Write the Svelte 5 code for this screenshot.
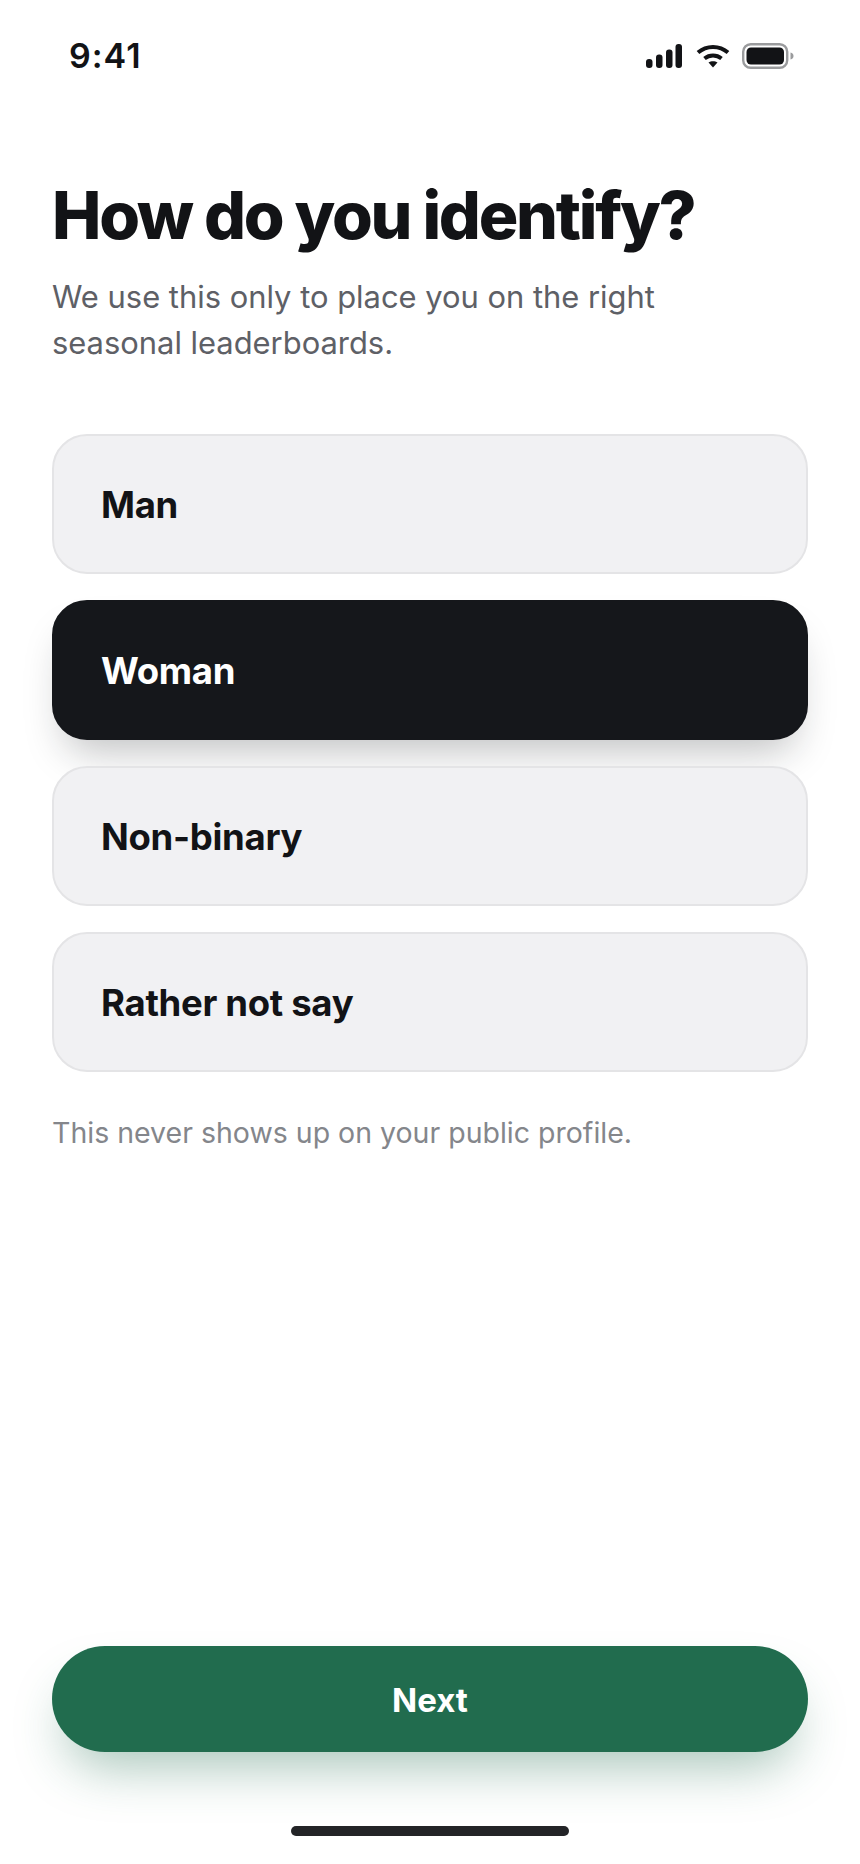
<script>
  const options = ['Man', 'Woman', 'Non-binary', 'Rather not say'];
  let selected = $state('Woman');
</script>

<div class="screen">
  <div class="statusbar">
    <span class="time">9:41</span>
    <div class="status-icons">
      <svg class="signal" width="36" height="24" viewBox="0 0 36 24" fill="#121316">
        <rect x="0" y="15" width="6.5" height="9" rx="3" />
        <rect x="10" y="10.5" width="6.5" height="13.5" rx="3" />
        <rect x="20" y="5.5" width="6.5" height="18.5" rx="3" />
        <rect x="29.5" y="0" width="6.5" height="24" rx="3" />
      </svg>
      <svg width="34" height="24" viewBox="0 0 34 24" fill="none" stroke="#121316" stroke-width="4">
        <path d="M2 8.500C10.500 1 23.500 1 32 8.500" />
        <path d="M8.500 14.500C13.500 10.500 20.500 10.500 25.500 14.500" />
        <path d="M12.500 18.500L17 23.500L21.500 18.500C19 16.800 15 16.800 12.500 18.500Z" fill="#121316" stroke="none" />
      </svg>
      <svg width="52" height="26" viewBox="0 0 52 26">
        <rect x="1.200" y="1.200" width="44" height="23.600" rx="7.500" fill="none" stroke="#9a9b9d" stroke-width="2.400" />
        <rect x="4.500" y="4.500" width="37.500" height="17" rx="4.500" fill="#121316" />
        <path d="M48.500 9.500C50.500 10 51.500 11.300 51.500 13C51.500 14.700 50.500 16 48.500 16.500Z" fill="#9a9b9d" />
      </svg>
    </div>
  </div>

  <main class="content">
    <h1>How do you identify?</h1>
    <p class="subtitle">We use this only to place you on the right seasonal leaderboards.</p>

    <div class="options">
      {#each options as option}
        <button class="option" class:active={selected === option} onclick={() => (selected = option)}>
          {option}
        </button>
      {/each}
    </div>

    <p class="note">This never shows up on your public profile.</p>
  </main>

  <div class="footer">
    <button class="next">Next</button>
  </div>
  <div class="home-bar"></div>
</div>

<style>
  :global(body) {
    margin: 0;
    background: #fff;
  }
  .screen {
    width: 860px;
    height: 1864px;
    display: flex;
    flex-direction: column;
    font-family: Inter, 'Liberation Sans', sans-serif;
    color: #121316;
    background: #fff;
    overflow: hidden;
  }
  .statusbar {
    display: flex;
    justify-content: space-between;
    align-items: center;
    height: 34px;
    padding: 39px 52px 0 69px;
  }
  .time {
    font-size: 34px;
    font-weight: 600;
    letter-spacing: 1px;
    line-height: 34px;
  }
  .status-icons {
    display: flex;
    align-items: center;
    gap: 12px;
    padding-right: 14px;
  }
  .signal {
    margin-right: 2px;
  }
  .content {
    flex: 1;
    padding: 104px 52px 0;
  }
  h1 {
    margin: 0;
    font-size: 66px;
    line-height: 76px;
    font-weight: 800;
    letter-spacing: -2.250px;
  }
  .subtitle {
    margin: 21px 0 0;
    width: 650px;
    font-size: 30.900px;
    line-height: 46px;
    color: #5e6066;
  }
  .options {
    display: flex;
    flex-direction: column;
    gap: 26px;
    margin-top: 68px;
  }
  .option {
    display: block;
    width: 100%;
    height: 140px;
    padding: 1px 47px 0;
    box-sizing: border-box;
    text-align: left;
    font: inherit;
    font-size: 36.500px;
    font-weight: 700;
    letter-spacing: -0.300px;
    color: #121316;
    background: #f1f1f3;
    border: 2px solid #e4e4e6;
    border-radius: 35px;
  }
  .option.active {
    color: #fff;
    background: #15171b;
    border-color: #15171b;
    box-shadow: 0 24px 40px -14px rgba(22, 24, 28, 0.28);
  }
  .note {
    margin: 42px 0 0;
    font-size: 28.500px;
    line-height: 38px;
    color: #84868b;
  }
  .footer {
    padding: 0 52px;
  }
  .next {
    display: block;
    width: 100%;
    height: 106px;
    padding: 1px 0 0;
    border: 0;
    border-radius: 53px;
    font: inherit;
    font-size: 33px;
    font-weight: 700;
    color: #fff;
    background: #216c4e;
    box-shadow: 0 28px 52px -14px rgba(33, 108, 78, 0.4);
  }
  .home-bar {
    width: 278px;
    height: 10px;
    margin: 74px auto 28px;
    border-radius: 5px;
    background: #232427;
  }
</style>
